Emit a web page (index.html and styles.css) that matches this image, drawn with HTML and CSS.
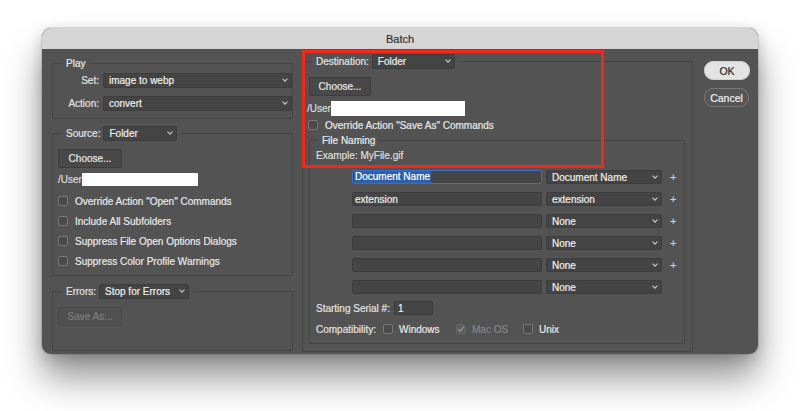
FILE: index.html
```html
<!DOCTYPE html>
<html>
<head>
<meta charset="utf-8">
<title>Batch</title>
<link rel="stylesheet" href="styles.css">
</head>
<body>
<div class="window">
  <div class="titlebar">Batch</div>
  <div class="content">
    <div class="col-left">
      <div class="group play">
        <div class="legend text">Play</div>
        <div class="play-grid">
          <span class="lbl right">Set:</span>
          <div class="select w189"><span>image to webp</span><span class="chev"></span></div>
          <span class="lbl right">Action:</span>
          <div class="select w189"><span>convert</span><span class="chev"></span></div>
        </div>
      </div>
      <div class="group source">
        <div class="legend"><span class="lbl">Source:</span><div class="select w74"><span>Folder</span><span class="chev"></span></div></div>
        <div class="src-body">
          <button class="btn w64">Choose...</button>
          <div class="path"><span>/User</span><span class="redact r-left"></span></div>
          <div class="checks">
            <div class="check"><span class="box"></span><span>Override Action "Open" Commands</span></div>
            <div class="check"><span class="box"></span><span>Include All Subfolders</span></div>
            <div class="check"><span class="box"></span><span>Suppress File Open Options Dialogs</span></div>
            <div class="check"><span class="box"></span><span>Suppress Color Profile Warnings</span></div>
          </div>
        </div>
      </div>
      <div class="group errors">
        <div class="legend"><span class="lbl">Errors:</span><div class="select w90"><span>Stop for Errors</span><span class="chev"></span></div></div>
        <div class="err-body">
          <button class="btn w64 disabled">Save As...</button>
        </div>
      </div>
    </div>

    <div class="col-center">
      <div class="group dest">
        <div class="legend"><span class="lbl">Destination:</span><div class="select w83"><span>Folder</span><span class="chev"></span></div></div>
        <div class="dest-body">
          <button class="btn w62 dest-choose">Choose...</button>
          <div class="path dest-path"><span>/User</span><span class="redact r-dest"></span></div>
          <div class="check dest-check"><span class="box"></span><span>Override Action "Save As" Commands</span></div>
          <div class="group naming">
            <div class="legend text naming-legend">File Naming</div>
            <div class="example">Example: MyFile.gif</div>
            <div class="name-grid">
              <div class="field focus"><span class="sel-text">Document Name</span></div>
              <div class="select"><span>Document Name</span><span class="chev"></span></div>
              <span class="plus">+</span>

              <div class="field"><span>extension</span></div>
              <div class="select"><span>extension</span><span class="chev"></span></div>
              <span class="plus">+</span>

              <div class="field"></div>
              <div class="select"><span>None</span><span class="chev"></span></div>
              <span class="plus">+</span>

              <div class="field"></div>
              <div class="select"><span>None</span><span class="chev"></span></div>
              <span class="plus">+</span>

              <div class="field"></div>
              <div class="select"><span>None</span><span class="chev"></span></div>
              <span class="plus">+</span>

              <div class="field"></div>
              <div class="select"><span>None</span><span class="chev"></span></div>
              <span></span>
            </div>
            <div class="serial"><span class="lbl w78">Starting Serial #:</span><div class="field num"><span>1</span></div></div>
            <div class="compat">
              <span class="lbl w67">Compatibility:</span>
              <div class="opt w73"><span class="box"></span><span>Windows</span></div>
              <div class="opt w67 off"><span class="box checked"><svg viewBox="0 0 10 10" width="10" height="10"><path d="M2.3 5.2 L4.2 7.1 L7.8 2.8" fill="none" stroke="#8c8c8c" stroke-width="1.4"/></svg></span><span>Mac OS</span></div>
              <div class="opt"><span class="box"></span><span>Unix</span></div>
            </div>
          </div>
        </div>
      </div>
    </div>

    <div class="col-right">
      <button class="pill ok">OK</button>
      <button class="pill cancel">Cancel</button>
    </div>
  </div>
  <div class="annot"></div>
</div>
</body>
</html>
```

FILE: styles.css
```css
* { box-sizing: border-box; }
html, body { margin: 0; padding: 0; background: #ffffff; }
body {
  min-height: 411px;
  padding: 28px 0 0 42px;
  font-family: "Liberation Sans", Arial, sans-serif;
  font-size: 10px;
  color: #e8e8e8;
  -webkit-text-stroke: 0.2px currentColor;
}

.window {
  position: relative;
  width: 716px;
  height: 326px;
  border-radius: 9px;
  overflow: hidden;
  background: #535353;
  box-shadow: 0 24px 36px rgba(0, 0, 0, 0.42), 0 4px 14px rgba(0, 0, 0, 0.18), 0 0 0 1px rgba(0, 0, 0, 0.1);
}

.titlebar {
  height: 21px;
  background: #d5d5d5;
  color: #333333;
  font-size: 11px;
  display: flex;
  align-items: center;
  justify-content: center;
}

.content {
  display: flex;
  height: 305px;
  padding: 0 8px 0 10px;
}

.col-left {
  width: 241px;
  display: flex;
  flex-direction: column;
  gap: 14px;
  padding: 14px 0 3px;
}

.col-center {
  width: 391px;
  margin-left: 9px;
  padding: 12px 0 2px;
  display: flex;
  flex-direction: column;
}

.col-right {
  margin-left: 11px;
  padding-top: 12px;
  display: flex;
  flex-direction: column;
  align-items: flex-start;
  gap: 8px;
}

/* group boxes */
.group {
  border: 1px solid #464646;
  display: flex;
  flex-direction: column;
}
.legend {
  display: flex;
  align-items: center;
  gap: 3px;
  align-self: flex-start;
  height: 15px;
  margin: -8px 0 0 9px;
  padding: 0 4px;
  background: #535353;
  color: #e8e8e8;
}
.legend.text { height: 12px; margin-top: -7px; }

.lbl { color: #e2e2e2; white-space: nowrap; }
.lbl.right { justify-self: end; }

/* selects */
.select {
  height: 15px;
  background: #444444;
  border: 1px solid #3d3d3d;
  border-radius: 2px;
  display: flex;
  align-items: center;
  justify-content: space-between;
  padding: 0 4px 0 5px;
  color: #eeeeee;
  white-space: nowrap;
}
.chev {
  width: 4px;
  height: 4px;
  border-right: 1.2px solid #cfcfcf;
  border-bottom: 1.2px solid #cfcfcf;
  transform: rotate(45deg);
  margin-top: -3px;
  flex: none;
}
.w189 { width: 189px; }
.w74 { width: 74px; }
.w90 { width: 90px; }
.w83 { width: 83px; }

/* buttons */
.btn {
  font: inherit;
  color: #e8e8e8;
  background: #484848;
  border: 1px solid #3e3e3e;
  border-radius: 2px;
  height: 19px;
  padding: 0;
}
.btn.w64 { width: 64px; }
.btn.w62 { width: 62px; }
.btn.disabled {
  color: #7e7e7e;
  background: #505050;
  border-color: #4a4a4a;
}

/* checkboxes */
.box {
  width: 10px;
  height: 10px;
  border: 1px solid #767676;
  background: #4b4b4b;
  border-radius: 2px;
  flex: none;
  display: flex;
  -webkit-text-stroke: 0;
}
.box.checked { background: #5e5e5e; border-color: #636363; }
.box svg { display: block; margin: -1px; }
.check {
  display: flex;
  align-items: center;
  gap: 7px;
  height: 20px;
}

/* Play */
.play-grid {
  display: grid;
  grid-template-columns: auto 189px;
  column-gap: 4px;
  row-gap: 8px;
  align-items: center;
  padding: 4px 0 7px 4px;
}

/* Source */
.src-body {
  display: flex;
  flex-direction: column;
  align-items: flex-start;
  padding: 8px 0 4px 5px;
}
.path {
  display: flex;
  align-items: center;
  color: #dcdcdc;
  margin-top: 5px;
}
.redact { background: #ffffff; display: block; }
.r-left { width: 116px; height: 13px; }
.r-dest { width: 134px; height: 15px; }
.checks {
  display: flex;
  flex-direction: column;
  margin-top: 5px;
}

/* Errors */
.errors { flex: 1; margin-top: 1px; }
.err-body { padding: 8px 0 0 5px; }

/* Destination */
.dest { flex: 1; }
.dest-body {
  flex: 1;
  display: flex;
  flex-direction: column;
  align-items: flex-start;
  padding: 8px 7px 7px 4px;
}
.dest-choose { margin-left: 2px; }
.dest-path { margin-top: 5px; }
.dest-check { height: 14px; margin: 2px 0 0 1px; }

.naming {
  align-self: stretch;
  flex: 1;
  margin: 8px 0 0 2px;
  padding: 0 0 6px 6px;
}
.naming-legend { margin-left: 2px; }
.example {
  margin-top: 4px;
  line-height: 12px;
  color: #dedede;
}
.name-grid {
  margin: 8px 0 0 36px;
  display: grid;
  grid-template-columns: 190px 116px auto;
  column-gap: 4px;
  row-gap: 8px;
  align-items: center;
}
.name-grid .select { height: 14px; }
.field {
  height: 14px;
  background: #454545;
  border: 1px solid #3d3d3d;
  border-radius: 2px;
  display: flex;
  align-items: center;
  padding-left: 2px;
  color: #eeeeee;
  white-space: nowrap;
}
.field.focus { border-color: #3a6fc8; padding-left: 1px; }
.sel-text {
  background: #2d5fab;
  color: #ffffff;
  line-height: 12px;
  padding: 0 1px;
}
.plus {
  margin-left: 4px;
  color: #cfcfcf;
  font-size: 11px;
}

.serial {
  display: flex;
  align-items: center;
  margin-top: 7px;
  height: 14px;
}
.w78 { width: 78px; }
.w67 { width: 67px; }
.w73 { width: 73px; }
.field.num { width: 39px; padding-left: 3px; }

.compat {
  display: flex;
  align-items: center;
  margin-top: 7px;
  height: 14px;
}
.opt {
  display: flex;
  align-items: center;
  gap: 6px;
}
.opt.off { color: #858585; }

/* right buttons */
.pill {
  font: inherit;
  font-size: 10.5px;
  height: 19px;
  border-radius: 9px;
  padding: 0;
}
.ok {
  width: 46px;
  background: #e3e3e3;
  color: #2b2b2b;
  border: 1px solid #d0d0d0;
}
.cancel {
  width: 45px;
  background: #565656;
  color: #efefef;
  border: 1px solid #767676;
}

/* annotation overlay */
.annot {
  position: absolute;
  left: 260px;
  top: 22px;
  width: 302px;
  height: 118px;
  border: 3px solid #f3281b;
  pointer-events: none;
}
```
